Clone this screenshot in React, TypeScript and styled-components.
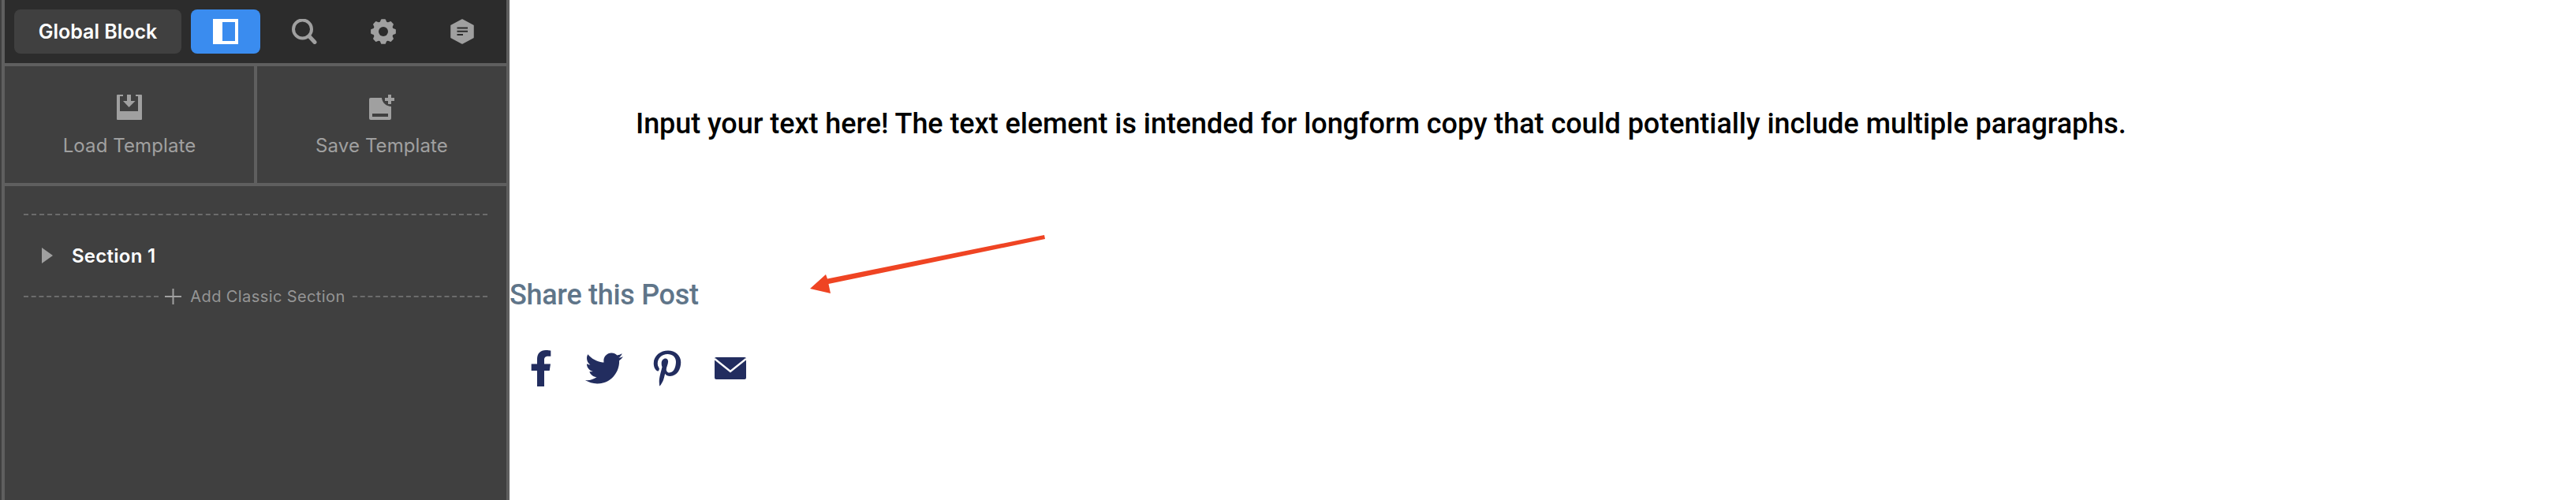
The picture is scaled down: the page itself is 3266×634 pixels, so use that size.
import React from "react";
import styled, { createGlobalStyle } from "styled-components";
import { FaFacebookF, FaTwitter, FaPinterestP } from "react-icons/fa";

const Global = createGlobalStyle`
  html, body { margin: 0; padding: 0; background: #fff; overflow: hidden; }
  body { font-family: Inter, "Liberation Sans", sans-serif; }
`;

const Page = styled.div`
  display: flex;
  width: 3266px;
  height: 634px;
`;

const Sidebar = styled.aside`
  flex: 0 0 646px;
  box-sizing: border-box;
  padding-left: 2px;
  background: #404040;
  height: 100%;
`;

const SidebarFrame = styled.div`
  box-sizing: border-box;
  height: 100%;
  display: flex;
  flex-direction: column;
  border-left: 4px solid #5f5f5f;
  border-right: 4px solid #5f5f5f;
`;

const Toolbar = styled.div`
  box-sizing: border-box;
  height: 84px;
  padding: 12px 6px 12px 12px;
  display: flex;
  align-items: flex-start;
  background: #2c2c2c;
  border-bottom: 4px solid #5f5f5f;
`;

const GlobalButton = styled.button`
  width: 212px;
  height: 56px;
  margin: 0 12px 0 0;
  padding: 0;
  border: 0;
  border-radius: 8px;
  background: #404040;
  color: #fff;
  font: 600 25px Inter, sans-serif;
`;

const ActiveTool = styled.div`
  width: 88px;
  height: 56px;
  margin-right: 6px;
  border-radius: 8px;
  background: #3a8cef;
  display: flex;
  align-items: center;
  justify-content: center;
`;

const Tool = styled.div`
  width: 100px;
  height: 56px;
  display: flex;
  align-items: center;
  justify-content: center;
`;

const Templates = styled.div`
  display: grid;
  grid-template-columns: 1fr 1fr;
  column-gap: 4px;
  height: 152px;
  box-sizing: border-box;
  background: #5f5f5f;
  border-bottom: 4px solid #5f5f5f;
`;

const TemplateCell = styled.div`
  background: #404040;
  display: flex;
  flex-direction: column;
  align-items: center;
  padding-top: 36px;
`;

const TemplateLabel = styled.span`
  margin-top: 18px;
  font-size: 24px;
  letter-spacing: 0.1px;
  line-height: 30px;
  color: #a0a0a0;
`;

const Sections = styled.div`
  padding: 35px 24px 0;
`;

const Dash = styled.div`
  flex: 1;
  height: 0;
  border-top: 2px dashed #6c6c6c;
`;

const Rule = styled(Dash)`
  flex: none;
`;

const SectionRow = styled.div`
  display: flex;
  align-items: center;
  height: 30px;
  margin-top: 36px;
  padding-left: 23px;
`;

const SectionTitle = styled.span`
  margin-left: 24px;
  font-size: 24px;
  letter-spacing: 0.25px;
  font-weight: 600;
  color: #fff;
`;

const AddRow = styled.div`
  display: flex;
  align-items: center;
  height: 30px;
  margin-top: 22px;
`;

const AddLabel = styled.span`
  margin: 0 9px 0 11px;
  font-size: 20px;
  letter-spacing: 0.4px;
  color: #959595;
`;

const Main = styled.main`
  position: relative;
  flex: 1;
  display: flex;
  flex-direction: column;
`;

const BodyText = styled.p`
  margin: 132px 0 0 160px;
  font: 500 36px/50px Roboto, sans-serif;
  letter-spacing: -0.06px;
  color: #000;
  white-space: nowrap;
`;

const ShareTitle = styled.h2`
  margin: 167px 0 0;
  font: 500 36px/50px Roboto, sans-serif;
  letter-spacing: -0.3px;
  color: #5f7589;
`;

const ShareRow = styled.div`
  display: flex;
  margin-top: 45px;
  color: #222d5f;
`;

const ShareCell = styled.div`
  width: 80px;
  height: 46px;
  display: flex;
  align-items: center;
  justify-content: center;
`;

const Arrow = styled.svg`
  position: absolute;
  left: 370px;
  top: 290px;
`;

const GEAR = (() => {
  const pts: string[] = [];
  const teeth = 8;
  for (let i = 0; i < teeth; i++) {
    const a = (i / teeth) * Math.PI * 2 - Math.PI / 2;
    const step = (Math.PI * 2) / teeth;
    const add = (r: number, o: number) =>
      pts.push(`${(16 + r * Math.cos(a + o * step)).toFixed(2)} ${(16 + r * Math.sin(a + o * step)).toFixed(2)}`);
    add(15, -0.17);
    add(15, 0.17);
    add(12, 0.36);
    add(12, 0.64);
  }
  return "M" + pts.join("L") + "Z";
})();

const Icon = ({ children, w = 32 }: { children: React.ReactNode; w?: number }) => (
  <svg width={w} height={32} viewBox={`0 0 ${w} 32`} fill="#a0a0a0">
    {children}
  </svg>
);

export default function App() {
  return (
    <Page>
      <Global />
      <Sidebar>
        <SidebarFrame>
          <Toolbar>
            <GlobalButton>Global Block</GlobalButton>
            <ActiveTool>
              <Icon>
                <path fill="#fff" fillRule="evenodd" d="M0 0H32V32H0ZM12 4V28H28V4Z" />
              </Icon>
            </ActiveTool>
            <Tool>
              <Icon>
                <circle cx="13.5" cy="13" r="11.5" fill="none" stroke="#a0a0a0" strokeWidth="4" />
                <path d="M22 22L29 29.5" stroke="#a0a0a0" strokeWidth="5" strokeLinecap="round" />
              </Icon>
            </Tool>
            <Tool>
              <Icon>
                <path
                  fillRule="evenodd"
                  stroke="#a0a0a0"
                  strokeWidth="2"
                  strokeLinejoin="round"
                  d={GEAR + "M16 10a6 6 0 1 0 0 12a6 6 0 1 0 0-12Z"}
                />
                <circle cx="16" cy="16" r="6" fill="#2c2c2c" />
              </Icon>
            </Tool>
            <Tool>
              <Icon w={30}>
                <path stroke="#a0a0a0" strokeWidth="1.5" strokeLinejoin="round" d="M15 1L29 8.5V23.5L15 31L1 23.5V8.5Z" />
                <path fill="#2c2c2c" d="M8.500 10.500H22V12.500H8.500ZM8.500 14.800H22V16.800H8.500ZM8.500 19H16V21H8.500Z" />
              </Icon>
            </Tool>
          </Toolbar>
          <Templates>
            <TemplateCell>
              <Icon>
                <path
                  fillRule="evenodd"
                  d="M1 0H8V2H4V21H27V2H24V0H31a1 1 0 0 1 1 1V31a1 1 0 0 1-1 1H1a1 1 0 0 1-1-1V1a1 1 0 0 1 1-1Z"
                />
                <path d="M13 0H18V8H23.500L15.500 16L8 8H13Z" />
              </Icon>
              <TemplateLabel>Load Template</TemplateLabel>
            </TemplateCell>
            <TemplateCell>
              <Icon>
                <path
                  fillRule="evenodd"
                  d="M2 4H16A12 12 0 0 0 28 15V30a2 2 0 0 1-2 2H2a2 2 0 0 1-2-2V6a2 2 0 0 1 2-2ZM4 24V28H24V24Z"
                />
                <path d="M24 0H28V4H32V8H28V12H24V8H20V4H24Z" />
              </Icon>
              <TemplateLabel>Save Template</TemplateLabel>
            </TemplateCell>
          </Templates>
          <Sections>
            <Rule />
            <SectionRow>
              <svg width="14" height="20" viewBox="0 0 14 20">
                <path fill="#a0a0a0" d="M0 0L14 10L0 20Z" />
              </svg>
              <SectionTitle>Section 1</SectionTitle>
            </SectionRow>
            <AddRow>
              <Dash />
              <svg width="21" height="20" viewBox="0 0 21 20" style={{ marginLeft: 8 }}>
                <path fill="#a0a0a0" d="M9.500 0H11.500V9H21V11H11.500V20H9.500V11H0V9H9.500Z" />
              </svg>
              <AddLabel>Add Classic Section</AddLabel>
              <Dash />
            </AddRow>
          </Sections>
        </SidebarFrame>
      </Sidebar>
      <Main>
        <BodyText>
          Input your text here! The text element is intended for longform copy that could potentially include multiple
          paragraphs.
        </BodyText>
        <ShareTitle>Share this Post</ShareTitle>
        <ShareRow>
          <ShareCell>
            <FaFacebookF size={46} />
          </ShareCell>
          <ShareCell>
            <FaTwitter size={48} />
          </ShareCell>
          <ShareCell>
            <FaPinterestP size={46} />
          </ShareCell>
          <ShareCell>
            <svg width="40" height="28" viewBox="0 0 40 28">
              <path fill="currentColor" d="M2 0H38a2 2 0 0 1 2 2V26a2 2 0 0 1-2 2H2a2 2 0 0 1-2-2V2a2 2 0 0 1 2-2Z" />
              <path fill="none" stroke="#fff" strokeWidth="2.500" d="M0 2L20 18L40 2" />
            </svg>
          </ShareCell>
        </ShareRow>
        <Arrow width="310" height="90" viewBox="0 0 310 90">
          <path fill="#ef4423" d="M11 76L31 58L33 63.500L308 8L309 13L34.500 70L37 82Z" />
        </Arrow>
      </Main>
    </Page>
  );
}
